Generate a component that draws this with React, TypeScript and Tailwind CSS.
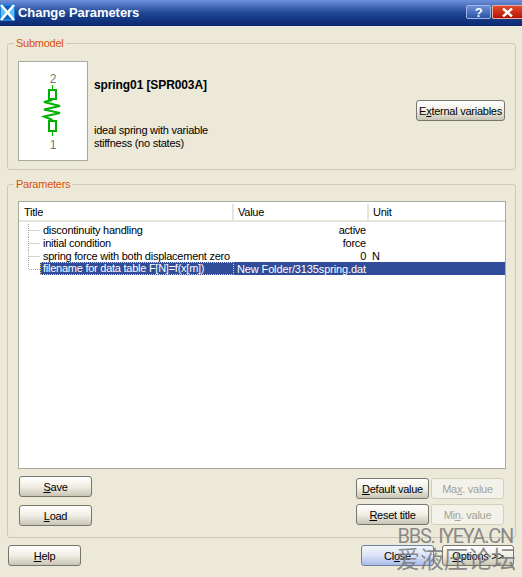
const Btn = ({
  children,
  kind = "normal",
  className = "w-[73px]",
}: {
  children: React.ReactNode;
  kind?: "normal" | "disabled" | "primary";
  className?: string;
}) => {
  const look =
    kind === "disabled"
      ? "border-[#d2cfbc] bg-[#f3f2ea] text-[#a3a294]"
      : kind === "primary"
        ? "border-[#6f7f9f] bg-gradient-to-b from-[#f4f6fc] via-[#dbe3f6] to-[#a9bbe8] text-black"
        : "border-[#77766c] bg-gradient-to-b from-white via-[#f0eee4] to-[#c9c5b5] text-black";
  return (
    <div
      className={`flex h-[21px] items-center justify-center whitespace-nowrap rounded-[3px] border pt-[1px] ${look} ${className}`}
    >
      <span>{children}</span>
    </div>
  );
};

const Group = ({
  label,
  className,
  children,
}: {
  label: string;
  className: string;
  children: React.ReactNode;
}) => (
  <div className={`relative rounded-[3px] border border-[#cdcab8] ${className}`}>
    <div className="absolute left-[6px] top-[-8px] bg-[#ece9d8] px-[2px] leading-[14px] text-[#d8500a]">
      {label}
    </div>
    {children}
  </div>
);

const TreeMark = ({ last }: { last?: boolean }) => (
  <svg width="21" height="13" className="shrink-0">
    <path
      d={last ? "M9.5 0V7.5H21" : "M9.5 0V13M9.5 6.5H21"}
      fill="none"
      stroke="#a9a89c"
      strokeDasharray="1 1"
    />
  </svg>
);

const SpringIcon = () => (
  <svg width="68" height="98" viewBox="0 0 68 98">
    <text x="34" y="21" textAnchor="middle" fontSize="12" fill="#777" fontFamily="Liberation Sans">
      2
    </text>
    <text x="34" y="87" textAnchor="middle" fontSize="12" fill="#777" fontFamily="Liberation Sans">
      1
    </text>
    <path d="M33.5 23V28M33.5 69V74" stroke="#00b000" strokeWidth="1" />
    <rect x="30" y="28" width="7" height="9" fill="none" stroke="#00b000" strokeWidth="2" />
    <rect x="30" y="59" width="7" height="10" fill="none" stroke="#00b000" strokeWidth="2" />
    <path
      d="M33.5 38L25 40L41 44L25 47.5L41 51L25 54.5L33.5 58"
      fill="none"
      stroke="#00b000"
      strokeWidth="2"
    />
  </svg>
);

const rows = [
  { title: "discontinuity handling", value: "active", unit: "" },
  { title: "initial condition", value: "force", unit: "" },
  { title: "spring force with both displacement zero", value: "0", unit: "N" },
];

export default function App() {
  return (
    <div
      className="relative h-[577px] w-[522px] overflow-hidden bg-[#ece9d8] text-[11px] leading-[13px] tracking-[-0.25px] text-black"
      style={{ fontFamily: '"Liberation Sans", Arial, sans-serif' }}
    >
      <div className="flex h-[26px] items-start bg-gradient-to-b from-[#7090dc] via-[#1d4795] to-[#0b276e]">
        <svg width="15" height="17" viewBox="0 0 15 17" className="mt-[4px] shrink-0">
          <rect width="15" height="17" fill="#1f7fd8" />
          <path d="M7.5 8.5L3 2H12ZM7.5 8.5L3 15H12Z" fill="#0f5fb8" />
          <path d="M7.5 8.5L1 3V14ZM7.5 8.5L14 3V14Z" fill="#58c4f4" />
          <path d="M1 1L14 16M14 1L1 16" stroke="#fff" strokeWidth="2.5" />
        </svg>
        <div className="ml-[3px] mt-[5px] text-[13px] font-bold leading-[15px] tracking-[-0.05px] text-white">
          Change Parameters
        </div>
        <div className="ml-auto mt-[5px] flex h-[14px] gap-[1px]">
          <div className="flex h-[14px] w-[25px] items-center justify-center rounded-[2px] border border-[#9fb4e4] bg-gradient-to-b from-[#6f8fd6] to-[#2c55a8] text-[13px] font-bold text-white">
            ?
          </div>
          <div className="flex h-[14px] w-[30px] items-center justify-center rounded-l-[2px] border border-r-0 border-[#e8b0a0] bg-gradient-to-b from-[#e04a30] to-[#b80c00]">
            <svg width="11" height="9" viewBox="0 0 11 9">
              <path d="M1 0.5L10 8.5M10 0.5L1 8.5" stroke="#fff" strokeWidth="2.4" />
            </svg>
          </div>
        </div>
      </div>

      <div className="px-[7px] pt-[17px]">
        <Group label="Submodel" className="h-[127px] w-[509px]">
          <div className="flex pl-[10px] pr-[10px] pt-[17px]">
            <div className="h-[100px] w-[70px] border border-[#a9a89c] bg-white">
              <SpringIcon />
            </div>
            <div className="ml-[6px] flex flex-col">
              <div className="mt-[18px] text-[12px] font-bold tracking-[-0.1px]">spring01 [SPR003A]</div>
              <div className="mt-[32px]">ideal spring with variable</div>
              <div>stiffness (no states)</div>
            </div>
            <Btn className="ml-auto mt-[39px] w-[89px]">
              E<u>x</u>ternal variables
            </Btn>
          </div>
        </Group>

        <Group label="Parameters" className="mt-[14px] h-[354px] w-[509px]">
          <div className="ml-[10px] mt-[16px] h-[268px] w-[488px] border border-[#a9a89c] bg-white">
            <div className="flex h-[20px] border-b-2 border-[#e6e4d8] pt-[2px]">
              <div className="flex w-[215px] items-center border-r-2 border-[#e6e4d8] pl-[5px]">Title</div>
              <div className="flex w-[135px] items-center border-r-2 border-[#e6e4d8] pl-[4px]">Value</div>
              <div className="flex flex-1 items-center pl-[4px]">Unit</div>
            </div>
            <div className="pt-[1px]">
              {rows.map((r) => (
                <div className="flex h-[13px] pt-[1px] leading-[12px]" key={r.title}>
                  <TreeMark />
                  <div className="w-[194px] whitespace-nowrap pl-[3px]">{r.title}</div>
                  <div className="w-[133px] pr-[1px] text-right">{r.value}</div>
                  <div className="pl-[5px]">{r.unit}</div>
                </div>
              ))}
              <div className="flex h-[13px]">
                <TreeMark last />
                <div className="flex flex-1 bg-[#314c98] text-white">
                  <div className="w-[194px] whitespace-nowrap border border-dotted border-[#f0d070] pl-[2px] leading-[11px]">
                    filename for data table F[N]=f(x[m])
                  </div>
                  <div className="pl-[3px] pt-[1px] leading-[12px] tracking-[-0.13px]">New Folder/3135spring.dat</div>
                </div>
              </div>
            </div>
          </div>

          <div className="flex justify-between pl-[11px] pr-[11px]">
            <div className="flex flex-col gap-[8px] pt-[7px]">
              <Btn><u>S</u>ave</Btn>
              <Btn><u>L</u>oad</Btn>
            </div>
            <div className="grid grid-cols-[73px_73px] gap-x-[2px] gap-y-[4px] pt-[9px]">
              <Btn><u>D</u>efault value</Btn>
              <Btn kind="disabled">Ma<u>x</u>. value</Btn>
              <Btn><u>R</u>eset title</Btn>
              <Btn kind="disabled">Mi<u>n</u>. value</Btn>
            </div>
          </div>
        </Group>
      </div>

      <div className="flex pl-[8px] pr-[8px] pt-[7px]">
        <Btn><u>H</u>elp</Btn>
        <Btn kind="primary" className="ml-auto w-[73px]">
          Cl<u>o</u>se
        </Btn>
        <Btn className="ml-[8px] w-[72px]">
          <u>O</u>ptions &gt;&gt;
        </Btn>
      </div>

      <div
        className="absolute right-[9px] top-[526px] text-[20px] leading-[20px] tracking-[-1.3px] text-[#77777a]/85"
        style={{ fontFamily: "Roboto, sans-serif" }}
      >
        BBS. IYEYA.CN
      </div>
      <div
        className="absolute right-[6px] top-[544px] text-[24px] leading-[28px] tracking-normal text-[#77777a]/85"
        style={{ fontFamily: '"Noto Sans CJK SC", sans-serif' }}
      >
        爱液压论坛
      </div>
    </div>
  );
}
